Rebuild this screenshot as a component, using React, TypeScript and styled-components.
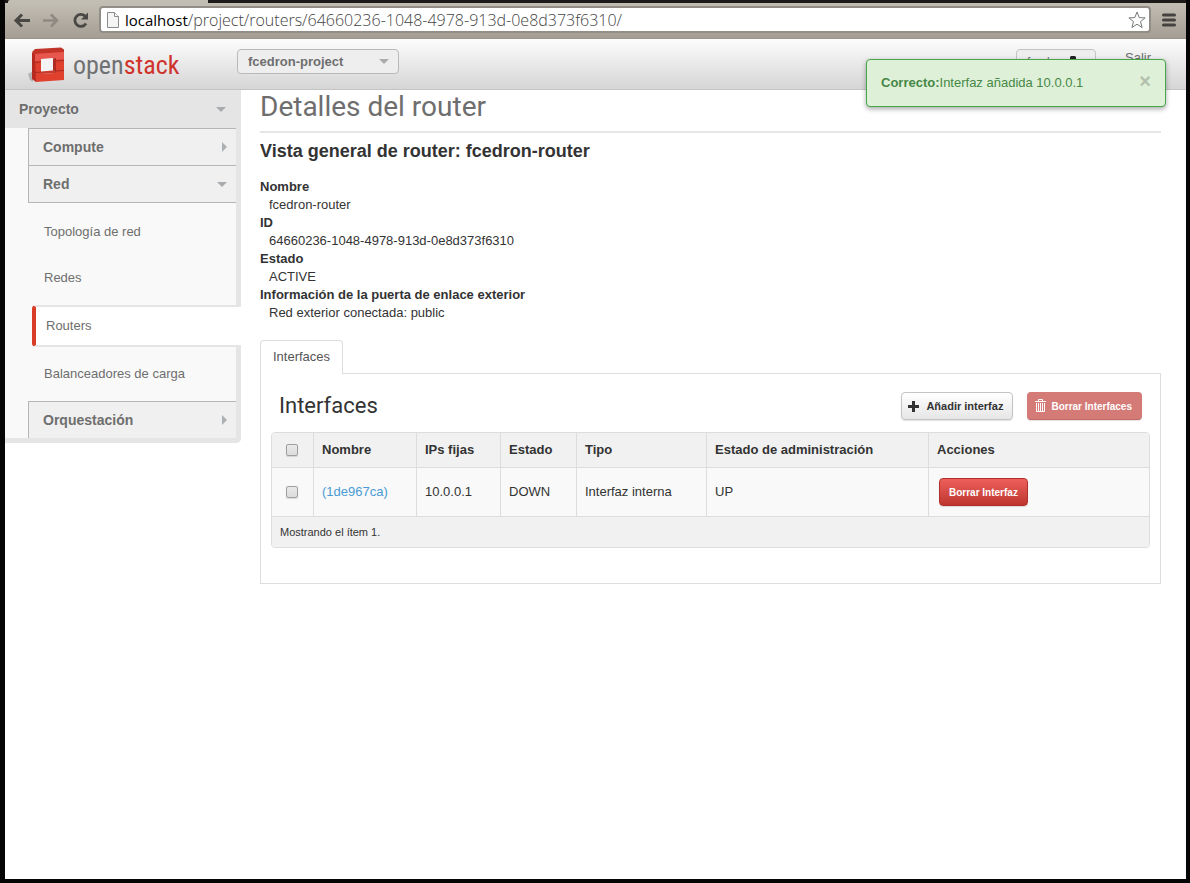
import React from "react";
import styled, { createGlobalStyle } from "styled-components";

const Global = createGlobalStyle`
  *, *::before, *::after { box-sizing: border-box; }
  body { margin: 0; background: #050505; font: 13px/18px "Liberation Sans", Arial, sans-serif; color: #333; }
  h1, h2, h3, dl, dd, ul, p { margin: 0; padding: 0; }
  button, select, input { font-family: inherit; }
`;

/* Browser window */
const Frame = styled.div`
  min-height: 100vh;
  padding: 0 4px 4px 5px;
  background: #050505;
  display: flex;
  flex-direction: column;
`;
const TabStrip = styled.div`
  height: 3px;
  padding-left: 3px;
  background: #1c1b19;
`;
const BrowserTab = styled.div`
  width: 200px;
  height: 3px;
  background: #c3beb4;
  border-radius: 2px 0 0 0;
`;
const Toolbar = styled.div`
  height: 36px;
  padding: 0 7px 2px 7px;
  display: flex;
  align-items: center;
  background: linear-gradient(#c3beb4, #a39d94);
  border-bottom: 1px solid #9a948b;
`;
const ToolButton = styled.button`
  width: 20px;
  height: 20px;
  margin-right: 9px;
  padding: 0;
  border: 0;
  background: none;
  flex: none;
  svg { display: block; margin: 0 auto; }
  &:last-child { margin-right: 0; }
`;
const Omnibox = styled.form`
  flex: 1;
  height: 27px;
  margin-right: 8px;
  padding: 0 3px 0 6px;
  display: flex;
  align-items: center;
  background: #fff;
  border: 2px solid #928d86;
  border-radius: 4px;
`;
const Address = styled.div`
  flex: 1;
  margin-left: 6px;
  font: 300 16px/20px "Open Sans", "Noto Sans", sans-serif;
  color: #444;
  white-space: nowrap;
`;
const Host = styled.span`
  color: #000;
  font-size: 15px;
  font-weight: 400;
`;

/* Dashboard page */
const Page = styled.div`
  position: relative;
  flex: 1;
  background: #fff;
`;
const Header = styled.header`
  height: 51px;
  padding: 0 35px 0 23px;
  display: flex;
  align-items: flex-start;
  background: linear-gradient(#fdfdfd, #d5d5d5);
  border-bottom: 1px solid #c4c4c4;
`;
const Brand = styled.a`
  width: 209px;
  padding-top: 8px;
  display: flex;
  text-decoration: none;
  color: #707173;
  font: 400 26px/36px "Roboto Condensed", "Open Sans Condensed", sans-serif;
  svg { flex: none; margin-right: 7px; }
`;
const BrandAccent = styled.span`
  color: #d0332b;
`;
const ProjectPicker = styled.div`
  position: relative;
  margin-top: 10px;
  select {
    appearance: none;
    width: 162px;
    height: 25px;
    padding: 0 10px;
    border: 1px solid #b9b9b9;
    border-radius: 4px;
    background: #eee;
    color: #6e6e6e;
    font-size: 13px;
    font-weight: 700;
  }
  svg { position: absolute; right: 10px; top: 10px; pointer-events: none; }
`;
const UserButton = styled.button`
  width: 80px;
  height: 25px;
  margin: 10px 29px 0 auto;
  padding: 0 10px;
  display: flex;
  align-items: center;
  border: 1px solid #c4c4c4;
  border-radius: 4px;
  background: #eee;
  color: #6e6e6e;
  font-size: 12px;
`;
const SignOut = styled.a`
  margin-top: 10px;
  color: #6e6e6e;
  text-decoration: none;
`;
const Alert = styled.div`
  position: absolute;
  right: 20px;
  top: 20px;
  width: 300px;
  height: 48px;
  padding: 0 14px;
  display: flex;
  align-items: center;
  background: #dff0d8;
  border: 1px solid #46a64b;
  border-radius: 4px;
  box-shadow: 0 2px 5px rgba(0, 0, 0, 0.35);
  color: #468847;
`;
const AlertClose = styled.button`
  margin-left: auto;
  padding: 0 0 4px;
  border: 0;
  background: none;
  color: #b2c0ad;
  font-size: 20px;
  font-weight: 700;
  line-height: 20px;
`;

const Columns = styled.div`
  display: flex;
  align-items: flex-start;
`;
const Sidebar = styled.nav`
  flex: none;
  width: 236px;
  background: #f9f9f9;
  border: solid #e5e5e5;
  border-width: 0 5px 5px 0;
  border-radius: 0 0 5px 0;
`;
const PanelToggle = styled.button`
  width: 100%;
  height: 38px;
  padding: 0 10px 0 14px;
  display: flex;
  align-items: center;
  justify-content: space-between;
  border: 0;
  background: #e5e5e5;
  color: #6e6e6e;
  font-size: 14px;
  font-weight: 700;
`;
const Groups = styled.div`
  margin-left: 23px;
`;
const GroupToggle = styled(PanelToggle)<{ $open?: boolean }>`
  height: ${(p) => (p.$open ? 38 : 37)}px;
  padding-right: 9px;
  border: solid #b5b5b5;
  border-width: ${(p) => (p.$open ? "1px 0 1px 1px" : "1px 0 0 1px")};
  background: #f0f0f0;
`;
const Links = styled.ul`
  list-style: none;
  padding: 6px 0 4px;
`;
const LinkItem = styled.li<{ $active?: boolean }>`
  height: ${(p) => (p.$active ? 42 : 46)}px;
  margin: ${(p) => (p.$active ? "4px -5px 4px 4px" : "0")};
  padding-left: ${(p) => (p.$active ? 10 : 16)}px;
  display: flex;
  align-items: center;
  ${(p) =>
    p.$active &&
    `background: #fff;
     border: solid #e5e5e5;
     border-width: 2px 0;
     border-left: 4px solid #d93c27;
     border-radius: 4px 0 0 4px;`}
  a { color: #6e6e6e; text-decoration: none; }
`;

const Main = styled.main`
  flex: 1;
  min-width: 0;
  margin: 0 25px 0 19px;
`;
const Title = styled.h1`
  padding-bottom: 7px;
  border-bottom: 2px solid #e5e5e5;
  font: 400 28px/34px Roboto, sans-serif;
  color: #6e6e6e;
`;
const Subtitle = styled.h2`
  margin: 8px 0 17px;
  font-size: 18px;
  line-height: 20px;
`;
const Details = styled.dl`
  dt { font-weight: 700; }
  dd { margin-left: 9px; }
`;
const Tabs = styled.div`
  display: flex;
  margin: 18px 0 -1px;
`;
const Tab = styled.button`
  position: relative;
  height: 34px;
  padding: 0 12px 2px;
  border: 1px solid #ddd;
  border-bottom: 0;
  border-radius: 4px 4px 0 0;
  background: #fff;
  color: #555;
  font-size: 13px;
`;
const Panel = styled.section`
  padding: 18px 10px 35px;
  border: 1px solid #ddd;
`;
const TableBar = styled.div`
  height: 28px;
  margin-bottom: 12px;
  padding: 0 8px;
  display: flex;
  align-items: center;
  gap: 14px;
`;
const TableTitle = styled.h3`
  flex: 1;
  font: 400 22px/28px Roboto, sans-serif;
`;
const Button = styled.button<{ $danger?: boolean; $icon?: boolean }>`
  height: 28px;
  padding: 0 9px 0 ${(p) => (p.$icon ? 6 : 9)}px;
  display: inline-flex;
  align-items: center;
  gap: ${(p) => (p.$danger ? 5 : 7)}px;
  white-space: nowrap;
  border-radius: 4px;
  border: 1px solid ${(p) => (p.$danger ? "#b32f2b" : "#c4c4c4")};
  background: ${(p) => (p.$danger ? "linear-gradient(#ee5f5b, #bd362f)" : "linear-gradient(#fff, #e6e6e6)")};
  color: ${(p) => (p.$danger ? "#fff" : "#333")};
  font-size: ${(p) => (p.$danger ? 10 : 11)}px;
  font-weight: 700;
  box-shadow: 0 1px 1px rgba(0, 0, 0, 0.12);
  &:disabled {
    padding-left: 7px;
    background: #d47b77;
    border-color: #d47b77;
    border-bottom-color: #c26b68;
    color: #fff;
  }
`;
const Table = styled.table`
  width: 100%;
  table-layout: fixed;
  border: 1px solid #ddd;
  border-radius: 4px;
  border-spacing: 0;
  overflow: hidden;
  th, td { padding: 0 8px; text-align: left; }
  th { height: 34px; background: #f1f1f1; }
  td { height: 49px; background: #f9f9f9; border-top: 1px solid #ddd; }
  th + th, td + td { border-left: 1px solid #ddd; }
  tfoot td { height: 31px; background: #f1f1f1; font-size: 11px; }
  a { color: #4a9bd5; text-decoration: none; }
`;
const Col = styled.col<{ $w?: number }>`
  width: ${(p) => (p.$w ? `${p.$w}px` : "auto")};
`;
const Tick = styled.input`
  appearance: none;
  display: block;
  width: 12px;
  height: 12px;
  margin: 0 6px;
  border: 1px solid #9f9f9f;
  border-radius: 2px;
  background: linear-gradient(#e9e9e9, #dcdcdc);
  box-shadow: 0 1px 1px rgba(0, 0, 0, 0.12);
`;
const RowAction = styled.div`
  padding-left: 2px;
  display: flex;
`;

const Caret = ({ right }: { right?: boolean }) =>
  right ? (
    <svg width="6" height="10" viewBox="0 0 6 10"><path d="M1 0v10l5-5z" fill="#adb0b3" /></svg>
  ) : (
    <svg width="10" height="5" viewBox="0 0 10 5"><path d="M0 0h10L5 5z" fill="#a9acae" /></svg>
  );

/* Square ring of bricks seen slightly from the left and above */
const Logo = () => (
  <svg width="38" height="36" viewBox="0 0 38 36">
    <path d="M0 27l5-3v11L2 33z" fill="#888" opacity=".5" />
    <path d="M4 5l3-3 26-1.500 3 2V8L8 10z" fill="#c23328" />
    <path d="M4 5.500l4 2V35l-4-3z" fill="#b92b21" />
    <path fillRule="evenodd" d="M7 7l29-2v28L8 35zM13 12v15l14-1V11z" fill="#e0412f" />
    <path d="M7 7l29-2v7l-9 .5V11l-14 1v1.500L7 14z" fill="#e8574e" />
    <path d="M13 12l14-1v12l-14 2z" fill="#f4f4f4" />
    <path d="M25 11.200l3-.2v15l-3-2.500z" fill="#b02c23" />
    <path d="M13 24.500l12-1 3 2.500-15 1z" fill="#c93a2c" />
    <path d="M4 14l4 1.500 5-.5M4 24l4 1.500 5-.5M28 14l8-.5M28 24l8-.5" stroke="#a52b22" fill="none" />
  </svg>
);
const Back = () => (
  <svg width="20" height="20" viewBox="0 0 20 20" fill="none" stroke="#4a4845" strokeWidth="3">
    <path d="M4 10.500h14M10 4.500l-6 6 6 6" />
  </svg>
);
const Forward = () => (
  <svg width="20" height="20" viewBox="0 0 20 20" fill="none" stroke="#8e8981" strokeWidth="2.500">
    <path d="M2 10.500h14M10 4.500l6 6-6 6" />
  </svg>
);
const Reload = () => (
  <svg width="20" height="20" viewBox="0 0 20 20">
    <path d="M16 13.500A6 6 0 1 1 15.500 6.500" fill="none" stroke="#4a4845" strokeWidth="2.800" />
    <path d="M18 2.500v7h-7z" fill="#4a4845" />
  </svg>
);
const PageIcon = () => (
  <svg width="12" height="16" viewBox="0 0 12 16">
    <path d="M.5.5h7l4 4v11H.5z" fill="#f5f5f5" stroke="#8b8b8b" />
    <path d="M7.500.5v4h4" fill="#fff" stroke="#8b8b8b" />
  </svg>
);
const Star = () => (
  <svg width="18" height="18" viewBox="0 0 18 18">
    <path d="M9 1l2.200 5.600 5.900.3-4.600 3.700 1.600 5.900L9 13.200l-5.100 3.300 1.600-5.900L.9 6.900l5.900-.3z" fill="#fff" stroke="#777" strokeLinejoin="round" />
  </svg>
);
const Menu = () => (
  <svg width="14" height="14" viewBox="0 0 14 14">
    <path d="M1.500 2h11M1.500 7h11M1.500 12h11" stroke="#45423f" strokeWidth="3" strokeLinecap="round" />
  </svg>
);
const Plus = () => (
  <svg width="11" height="11" viewBox="0 0 11 11"><path d="M4 0h3v4h4v3H7v4H4V7H0V4h4z" fill="#333" /></svg>
);
const Trash = () => (
  <svg width="11" height="14" viewBox="0 0 11 14">
    <path d="M3.500 2V.5h4V2M0 2.500h11" stroke="#fff" fill="none" />
    <path d="M1.500 4v8.500h8V4M3.500 4v8M5.500 4v8M7.500 4v8" stroke="#fff" fill="none" />
  </svg>
);
const UserIcon = () => (
  <svg width="12" height="12" viewBox="0 0 12 12">
    <path d="M4 0h4l1 1v4L8 7l4 2v3H0V9l4-2-1-2V1z" fill="#222" />
  </svg>
);

const details = [
  ["Nombre", "fcedron-router"],
  ["ID", "64660236-1048-4978-913d-0e8d373f6310"],
  ["Estado", "ACTIVE"],
  ["Información de la puerta de enlace exterior", "Red exterior conectada: public"],
];
const links = ["Topología de red", "Redes", "Routers", "Balanceadores de carga"];
const headings = ["Nombre", "IPs fijas", "Estado", "Tipo", "Estado de administración", "Acciones"];

export default function App() {
  return (
    <Frame>
      <Global />
      <TabStrip><BrowserTab /></TabStrip>
      <Toolbar>
        <ToolButton aria-label="Atrás"><Back /></ToolButton>
        <ToolButton aria-label="Adelante"><Forward /></ToolButton>
        <ToolButton aria-label="Recargar"><Reload /></ToolButton>
        <Omnibox>
          <PageIcon />
          <Address><Host>localhost</Host>/project/routers/64660236-1048-4978-913d-0e8d373f6310/</Address>
          <Star />
        </Omnibox>
        <ToolButton aria-label="Menú"><Menu /></ToolButton>
      </Toolbar>
      <Page>
        <Header>
          <Brand href="#"><Logo /><span>open<BrandAccent>stack</BrandAccent></span></Brand>
          <ProjectPicker>
            <select aria-label="Proyecto actual"><option>fcedron-project</option></select>
            <Caret />
          </ProjectPicker>
          <UserButton>fcedron<UserIcon /></UserButton>
          <SignOut href="#">Salir</SignOut>
        </Header>
        <Columns>
          <Sidebar>
            <PanelToggle>Proyecto<Caret /></PanelToggle>
            <Groups>
              <GroupToggle>Compute<Caret right /></GroupToggle>
              <GroupToggle $open>Red<Caret /></GroupToggle>
              <Links>
                {links.map((l) => (
                  <LinkItem key={l} $active={l === "Routers"}><a href="#">{l}</a></LinkItem>
                ))}
              </Links>
              <GroupToggle>Orquestación<Caret right /></GroupToggle>
            </Groups>
          </Sidebar>
          <Main>
            <Title>Detalles del router</Title>
            <Subtitle>Vista general de router: fcedron-router</Subtitle>
            <Details>
              {details.map(([k, v]) => (
                <React.Fragment key={k}><dt>{k}</dt><dd>{v}</dd></React.Fragment>
              ))}
            </Details>
            <Tabs><Tab>Interfaces</Tab></Tabs>
            <Panel>
              <TableBar>
                <TableTitle>Interfaces</TableTitle>
                <Button $icon><Plus />Añadir interfaz</Button>
                <Button $icon $danger disabled><Trash />Borrar Interfaces</Button>
              </TableBar>
              <Table>
                <colgroup>
                  <Col $w={41} /><Col $w={103} /><Col $w={84} /><Col $w={76} /><Col $w={130} /><Col $w={222} /><Col />
                </colgroup>
                <thead>
                  <tr>
                    <th><Tick type="checkbox" aria-label="Seleccionar todo" /></th>
                    {headings.map((h) => <th key={h}>{h}</th>)}
                  </tr>
                </thead>
                <tbody>
                  <tr>
                    <td><Tick type="checkbox" aria-label="Seleccionar 1de967ca" /></td>
                    <td><a href="#">(1de967ca)</a></td>
                    <td>10.0.0.1</td>
                    <td>DOWN</td>
                    <td>Interfaz interna</td>
                    <td>UP</td>
                    <td><RowAction><Button $danger>Borrar Interfaz</Button></RowAction></td>
                  </tr>
                </tbody>
                <tfoot>
                  <tr><td colSpan={7}>Mostrando el ítem 1.</td></tr>
                </tfoot>
              </Table>
            </Panel>
          </Main>
        </Columns>
        <Alert role="status">
          <b>Correcto:</b>Interfaz añadida 10.0.0.1
          <AlertClose aria-label="Cerrar">×</AlertClose>
        </Alert>
      </Page>
    </Frame>
  );
}
